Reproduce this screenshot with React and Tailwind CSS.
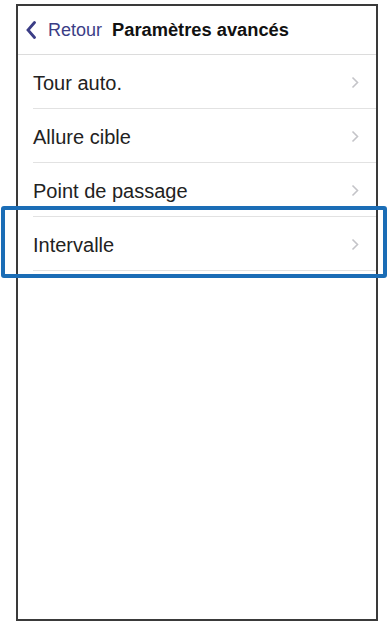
import React from "react";

const items = ["Tour auto.", "Allure cible", "Point de passage", "Intervalle"];

const Chevron = () => (
  <svg width="8" height="13" viewBox="0 0 8 13" fill="none">
    <path d="M1.5 1.5 L6.5 6.5 L1.5 11.5" stroke="#c4c4c8" strokeWidth="1.6" />
  </svg>
);

export default function App() {
  return (
    <div
      className="relative w-[387px] h-[623px] bg-white overflow-hidden"
      style={{ fontFamily: '"Liberation Sans", Arial, sans-serif' }}
    >
      {/* phone screen frame */}
      <div className="ml-[16px] mt-[4px] w-[362px] h-[617px] border-2 border-[#3a3a3a] bg-white">
        {/* nav bar */}
        <div className="h-[49px] flex items-center border-b border-[#dcdcdc] pl-[8px]">
          <svg width="10" height="18" viewBox="0 0 10 18" fill="none" className="mr-[12px]">
            <path d="M8.5 1.5 L2 9 L8.5 16.5" stroke="#3b3d86" strokeWidth="2.8" strokeLinecap="round" />
          </svg>
          <span className="text-[18px] text-[#3b3d86]">Retour</span>
          <span className="ml-[10px] text-[18.3px] font-bold text-[#111]">Paramètres avancés</span>
        </div>
        {/* list */}
        <div className="pl-[15px]">
          {items.map((item) => (
            <div
              key={item}
              className="h-[54px] flex items-center justify-between border-b border-[#e2e2e2] pr-[17px] pt-[2px]"
            >
              <span className="text-[20px] text-[#222]">{item}</span>
              <Chevron />
            </div>
          ))}
        </div>
      </div>
      {/* highlight box */}
      <div className="absolute left-[1px] top-[206px] w-[386px] h-[72px] border-[4px] border-[#1b6db6] rounded-[3px]" />
    </div>
  );
}
